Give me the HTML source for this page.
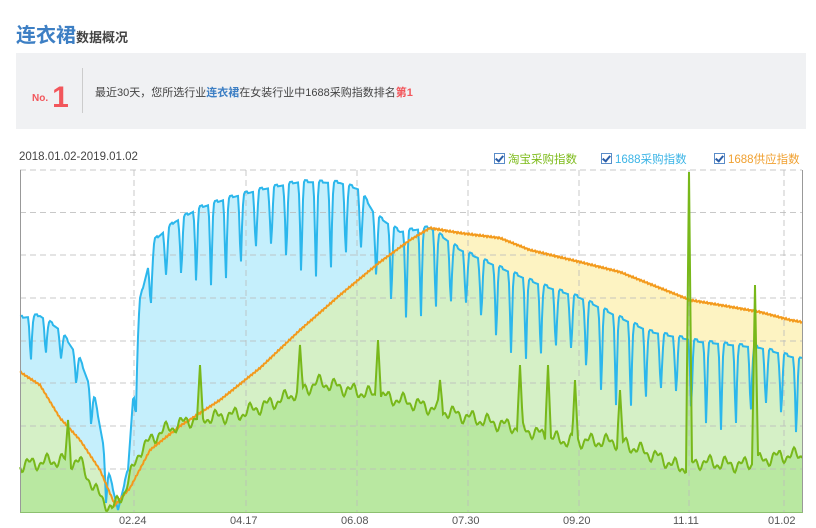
<!DOCTYPE html>
<html><head><meta charset="utf-8"><style>
body{margin:0;width:816px;height:528px;background:#fff;font-family:"Liberation Sans","Noto Sans CJK SC",sans-serif;position:relative;overflow:hidden}
.t{position:absolute;left:16px;top:19px;font-size:20px;font-weight:bold;color:#3d7fc4}
.t span{font-size:13px;color:#444}
.box{position:absolute;left:16px;top:53px;width:790px;height:76px;background:#f0f1f3}
.no{position:absolute;left:16px;top:22px;color:#f2565b;font-weight:bold}
.no b{font-size:10px}.no i{font-style:normal;font-size:30px;position:relative;top:6px;margin-left:4px}
.sep{position:absolute;left:66px;top:15px;width:1px;height:45px;background:#ccc}
.msg{position:absolute;left:79px;top:31px;font-size:11px;color:#444}
.msg .b{color:#3d7fc4;font-weight:bold}.msg .r{color:#f2565b;font-weight:bold}
.d{position:absolute;left:19px;top:151px;font-size:11.5px;color:#444}
.lg{position:absolute;top:151px;font-size:11.5px}
.cb{display:inline-block;width:9px;height:9px;border:1px solid #5a8cc8;background:#fff;margin-right:3px;vertical-align:-1px;position:relative}
.cb:after{content:"";position:absolute;left:2px;top:0;width:3px;height:6px;border:solid #2b5ea8;border-width:0 2px 2px 0;transform:rotate(40deg)}
.ax{position:absolute;top:515px;font-size:11px;color:#555}
</style></head><body>
<div class="t">连衣裙<span>数据概况</span></div>
<div class="box"><div class="no"><b>No.</b><i>1</i></div><div class="sep"></div>
<div class="msg">最近30天，您所选行业<span class="b">连衣裙</span>在女装行业中1688采购指数排名<span class="r">第1</span></div></div>
<div class="d">2018.01.02-2019.01.02</div>
<div class="lg" style="left:494px;color:#7dbb1a"><span class="cb"></span>淘宝采购指数</div>
<div class="lg" style="left:601px;color:#3bb4e6"><span class="cb"></span>1688采购指数</div>
<div class="lg" style="left:714px;color:#f0a030"><span class="cb"></span>1688供应指数</div>
<svg id="s" width="816" height="528" style="position:absolute;left:0;top:0"></svg>
<div class="ax" style="left:119px">02.24</div><div class="ax" style="left:230px">04.17</div>
<div class="ax" style="left:341px">06.08</div><div class="ax" style="left:452px">07.30</div>
<div class="ax" style="left:563px">09.20</div><div class="ax" style="left:673px">11.11</div>
<div class="ax" style="left:768px">01.02</div>
<script>
function interp(k,x){for(var i=0;i<k.length-1;i++){if(x>=k[i][0]&&x<=k[i+1][0]){var t=(x-k[i][0])/(k[i+1][0]-k[i][0]);return k[i][1]+t*(k[i+1][1]-k[i][1]);}}return k[k.length-1][1];}
var B=[[20,318],[40,316],[60,330],[80,360],[95,400],[108,470],[118,510],[128,470],[140,300],[155,240],[175,222],[200,208],[230,198],[260,190],[300,182],[340,183],[360,190],[375,215],[400,232],[430,228],[460,250],[500,268],[540,285],[580,298],[620,318],[650,332],[700,342],[760,348],[802,360]];
var D=[[20,50],[100,40],[140,70],[300,95],[400,90],[500,80],[600,90],[700,85],[802,90]];
var O=[[20,372],[40,385],[60,418],[80,440],[100,470],[115,505],[130,488],[150,450],[180,426],[220,400],[260,368],[300,330],[340,295],[380,262],[410,240],[430,228],[460,233],[500,238],[530,250],[580,262],[620,272],[660,288],[690,300],[720,305],[760,312],[790,320],[802,322]];
var G=[[20,465],[60,460],[80,462],[95,490],[112,510],[125,490],[140,450],[160,432],[190,420],[240,414],[280,400],[320,382],[350,390],[400,400],[440,410],[480,420],[520,428],[560,440],[620,442],[660,458],[680,468],[700,462],[740,465],[780,456],[802,455]];
var spikes=[[68,420],[200,365],[300,345],[378,340],[440,380],[520,365],[548,365],[575,380],[620,390],[689,172],[755,285]];
var bl=[],ol=[],gl=[],il=[];
for(var x=20;x<=802;x+=1){
 var b=interp(B,x);var ph=((x-20)%15);
 var depth=(x>108&&x<132)?0:interp(D,x)*(0.8+0.2*Math.sin(x*0.9));
 if(ph>=9&&ph<=13)b+=depth*(1-Math.abs(ph-11)/2.5);
 else if(ph<3)b-=2;
 if(b>511)b=511;
 bl.push([x,b]);
 var o=interp(O,x)+Math.sin(x*2.3)*0.8;
 ol.push([x,o]);il.push([x,Math.max(b,o)]);
 var g=interp(G,x)+Math.sin(x*0.9)*3+Math.sin(x*0.37)*5;
 for(var s=0;s<spikes.length;s++){var dx=Math.abs(x-spikes[s][0]);if(dx<3){g=Math.min(g,spikes[s][1]+dx*(interp(G,x)-spikes[s][1])/3);}}
 if(g>511)g=511;gl.push([x,g]);}
function pts(a){return a.map(function(p){return p[0]+","+p[1].toFixed(1)}).join(" ")}
function area(a){return "20,512 "+pts(a)+" 802,512"}
var h='';
h+='<polygon points="'+area(ol)+'" fill="#fdf3c2"/>';
h+='<polygon points="'+area(bl)+'" fill="#c5effc"/>';
h+='<polygon points="'+area(il)+'" fill="#d5f0c6"/>';
h+='<polygon points="'+area(gl)+'" fill="#b9e8a1"/>';
var grid='';
[170,212.5,255,298,341,383,426,469].forEach(function(y){grid+='<line x1="20" x2="802" y1="'+y+'" y2="'+y+'" stroke="#bbb" stroke-dasharray="6,4" stroke-width="1" opacity="0.8"/>'});
[134,246,357,468,579,689,784].forEach(function(x){grid+='<line y1="170" y2="512" x1="'+x+'" x2="'+x+'" stroke="#bbb" stroke-dasharray="6,4" stroke-width="1" opacity="0.8"/>'});
h+=grid;
h+='<polyline points="'+pts(bl)+'" fill="none" stroke="#2cb7ec" stroke-width="2"/>';
h+='<polyline points="'+pts(ol)+'" fill="none" stroke="#f39a1c" stroke-width="2"/>';
h+='<polyline points="'+pts(gl)+'" fill="none" stroke="#78b81a" stroke-width="2"/>';
h+='<line x1="20.5" y1="170" x2="20.5" y2="512" stroke="#999"/><line x1="802.5" y1="170" x2="802.5" y2="512" stroke="#999"/><line x1="20" y1="512.5" x2="803" y2="512.5" stroke="#8cc070"/>';
document.getElementById('s').innerHTML=h;
</script>
</body></html>
